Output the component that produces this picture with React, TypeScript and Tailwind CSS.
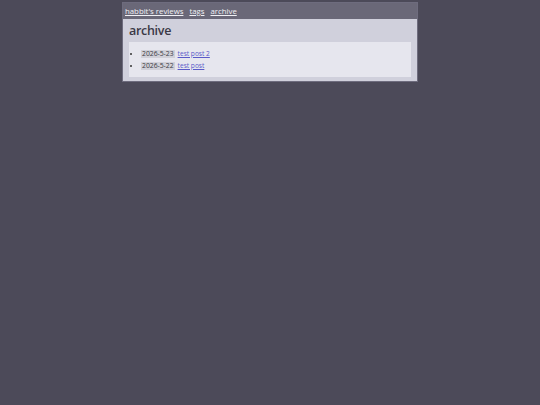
export default function App() {
  const posts = [
    { date: "2026-5-23", title: "test post 2" },
    { date: "2026-5-22", title: "test post" },
  ];
  return (
    <div className="min-h-screen w-full bg-[#4c4a59] pt-[2px]" style={{ fontFamily: '"Open Sans", sans-serif' }}>
      <div className="mx-auto w-[296px] border border-[#6e6c7e] bg-[#d0d0dc]">
        <nav className="flex h-[16px] items-center gap-[6px] bg-[#6a6878] px-[2px] pt-[1px] text-[7.8px] leading-none text-[#f0f0f4]">
          <a href="#" className="underline">habbit's reviews</a>
          <a href="#" className="underline">tags</a>
          <a href="#" className="underline">archive</a>
        </nav>
        <div className="px-[6px] pb-[4px] pt-[3px]">
          <h1 className="mb-[2px] text-[12.5px] font-semibold leading-[18px] tracking-[-0.3px] text-[#3a3846]">archive</h1>
          <div className="bg-[#e6e6ee] pb-[5px] pl-[4px] pt-[6px]">
            <ul className="list-disc pl-[8px] text-[7px] text-[#333]">
              {posts.map((p) => (
                <li key={p.date} className="h-[12px] leading-[12px] marker:text-[#333]">
                  <span className="flex items-center gap-[3px]">
                    <span className="bg-[#d0d0d8] px-[1px] text-[6.8px] font-medium leading-[8px] text-[#3a3a44]">{p.date}</span>
                    <a href="#" className="text-[6.6px] text-[#5a5ac8] underline">{p.title}</a>
                  </span>
                </li>
              ))}
            </ul>
          </div>
        </div>
      </div>
    </div>
  );
}
